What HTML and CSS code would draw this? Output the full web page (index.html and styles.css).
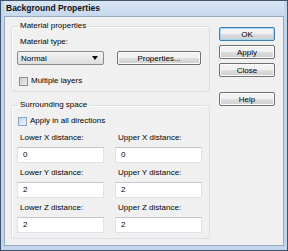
FILE: index.html
```html
<!DOCTYPE html>
<html lang="en">
<head>
  <meta charset="UTF-8" />
  <title>Background Properties</title>
  <link rel="stylesheet" href="styles.css">
</head>
<body>

  <div class="window">
    <div class="titlebar">Background Properties</div>

    <div class="client">
      <div class="groups">
        <fieldset class="group group-material">
          <legend>Material properties</legend>
          <div class="label">Material type:</div>
          <div class="row">
            <div class="dropdown">
              <span>Normal</span>
              <span class="arrow"></span>
            </div>
            <button class="btn btn-props">Properties...</button>
          </div>
          <label class="check"><span class="box box-gray"></span>Multiple layers</label>
        </fieldset>

        <fieldset class="group group-space">
          <legend>Surrounding space</legend>
          <label class="check"><span class="box box-blue"></span>Apply in all directions</label>

          <div class="fields">
            <div class="field">
              <div class="label">Lower X distance:</div>
              <div class="input">0</div>
            </div>
            <div class="field">
              <div class="label">Upper X distance:</div>
              <div class="input">0</div>
            </div>
            <div class="field">
              <div class="label">Lower Y distance:</div>
              <div class="input">2</div>
            </div>
            <div class="field">
              <div class="label">Upper Y distance:</div>
              <div class="input">2</div>
            </div>
            <div class="field">
              <div class="label">Lower Z distance:</div>
              <div class="input">2</div>
            </div>
            <div class="field">
              <div class="label">Upper Z distance:</div>
              <div class="input">2</div>
            </div>
          </div>
        </fieldset>
      </div>

      <div class="buttons">
        <button class="btn btn-default">OK</button>
        <button class="btn">Apply</button>
        <button class="btn">Close</button>
        <button class="btn btn-help">Help</button>
      </div>
    </div>
  </div>

</body>
</html>
```

FILE: styles.css
```css
* {
  box-sizing: border-box;
}

body {
  margin: 0;
  padding: 0;
  font-family: 'Liberation Sans', Arial, sans-serif;
  font-size: 8px;
  color: #000;
  background-color: #fff;
}

.window {
  width: 288px;
  height: 251px;
  border: 1px solid #3f5468;
  background-color: #c2d5ec;
  padding: 0 3px 4px 3px;
  display: flex;
  flex-direction: column;
}

.titlebar {
  height: 15px;
  line-height: 15px;
  padding-left: 2px;
  font-weight: bold;
  font-size: 8.5px;
  color: #111;
  background: linear-gradient(#d9e5f3, #c6d8ee);
}

.client {
  flex-grow: 1;
  background-color: #f0f0f0;
  border: 1px solid #97abc2;
  display: flex;
  padding: 4px 7px 0 6px;
}

.groups {
  width: 199px;
  display: flex;
  flex-direction: column;
}

.group {
  margin: 0;
  border: 1px solid #d5dfe5;
  border-radius: 3px;
  box-shadow: inset 1px 1px #fff;
  padding: 6px 5px 5px 5px;
  min-width: 0;
}

.group legend {
  padding: 0 2px;
  margin-left: 1px;
  line-height: 10px;
}

.group-space {
  margin-top: 8px;
}

.label {
  line-height: 10px;
  margin-left: 3px;
}

.row {
  display: flex;
  align-items: center;
  margin-top: 4px;
}

.dropdown {
  width: 87px;
  height: 14px;
  border: 1px solid #8a8a8a;
  border-radius: 2px;
  background: linear-gradient(#f4f4f4, #dedede);
  display: flex;
  align-items: center;
  justify-content: space-between;
  padding: 0 5px 0 3px;
}

.arrow {
  width: 0;
  height: 0;
  border-left: 3.5px solid transparent;
  border-right: 3.5px solid transparent;
  border-top: 4px solid #000;
}

.btn {
  font-family: inherit;
  font-size: 8px;
  color: #000;
  height: 14px;
  padding: 0;
  border: 1px solid #707070;
  border-radius: 2px;
  background: linear-gradient(#f2f2f2 45%, #dcdcdc 55%, #cfcfcf);
  box-shadow: inset 0 0 0 1px #fbfbfb;
}

.btn-props {
  width: 84px;
  margin-left: 13px;
}

.btn-default {
  border-color: #3c7fb1;
  box-shadow: inset 0 0 0 1px #9fd5f3;
}

.check {
  display: flex;
  align-items: center;
  line-height: 10px;
  margin-top: 11px;
  margin-left: 2px;
}

.box {
  width: 9px;
  height: 9px;
  margin-right: 3px;
  border: 1px solid #8e8f8f;
}

.box-gray {
  background: linear-gradient(135deg, #cfcfcf, #ececec);
}

.box-blue {
  border-color: #8aa4c1;
  background: linear-gradient(135deg, #c3d7ec, #f0f6fc);
}

.group-space .check {
  margin-top: 0;
  margin-left: 1px;
}

.fields {
  display: grid;
  grid-template-columns: 87px 87px;
  column-gap: 11px;
  row-gap: 5px;
  margin-top: 7px;
}

.field .input {
  margin-top: 4px;
  height: 16px;
  line-height: 14px;
  background-color: #fff;
  border: 1px solid #dfe2e7;
  border-top-color: #c3c7cd;
  padding-left: 5px;
}

.buttons {
  width: 56px;
  margin-left: 9px;
  padding-top: 6px;
  display: flex;
  flex-direction: column;
  gap: 4px;
}

.btn-help {
  margin-top: 11px;
}
```
